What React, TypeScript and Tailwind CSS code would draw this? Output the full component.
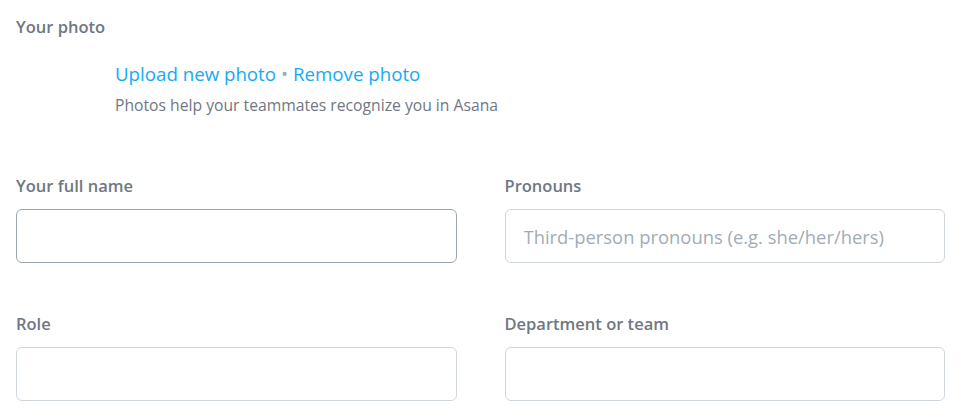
export default function App() {
  const fieldLabel = 'block text-[16.5px] font-semibold leading-5 text-[#6f7782]'
  const inputBase =
    'h-[54px] w-full rounded-[6px] border bg-white px-[18px] text-[18.4px] text-[#151b26] placeholder:text-[#a2acb5] focus:outline-none'

  return (
    <div className="min-h-screen bg-white font-['Open_Sans',sans-serif]">
      <div className="w-[945px] pl-4 pt-[17px]">
        {/* Photo */}
        <div className={fieldLabel}>Your photo</div>
        <div className="mt-[25px] pl-[99px]">
          <div className="text-[18.7px] leading-6 text-[#14aaf5]">
            <span>Upload new photo</span>
            <span className="mx-[5px] text-[#a2acb5]">•</span>
            <span>Remove photo</span>
          </div>
          <p className="mt-[9px] text-[15.7px] leading-5 text-[#6f7782]">
            Photos help your teammates recognize you in Asana
          </p>
        </div>

        {/* Fields */}
        <div className="mt-[61px] grid grid-cols-2 gap-x-12 gap-y-[51px]">
          <div>
            <label className={fieldLabel}>Your full name</label>
            <input className={`${inputBase} mt-[13px] border-[#9ca6af]`} />
          </div>
          <div>
            <label className={fieldLabel}>Pronouns</label>
            <input
              className={`${inputBase} mt-[13px] border-[#cfd6dc]`}
              placeholder="Third-person pronouns (e.g. she/her/hers)"
            />
          </div>
          <div>
            <label className={fieldLabel}>Role</label>
            <input className={`${inputBase} mt-[13px] border-[#cfd6dc]`} />
          </div>
          <div>
            <label className={fieldLabel}>Department or team</label>
            <input className={`${inputBase} mt-[13px] border-[#cfd6dc]`} />
          </div>
        </div>
      </div>
    </div>
  )
}
